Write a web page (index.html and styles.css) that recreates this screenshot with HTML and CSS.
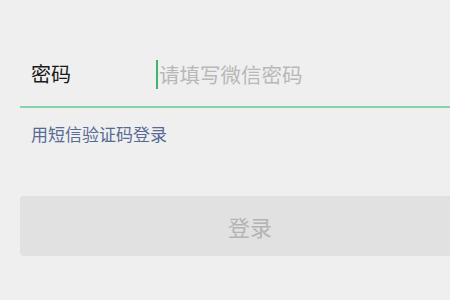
FILE: index.html
```html
<!DOCTYPE html>
<html lang="zh">
<head>
<meta charset="utf-8">
<link rel="stylesheet" href="styles.css">
</head>
<body>
<div class="page">
  <div class="field">
    <span class="label">密码</span>
    <span class="input"><span class="cursor"></span><span class="placeholder">请填写微信密码</span></span>
  </div>
  <div class="sms">用短信验证码登录</div>
  <div class="btn">登录</div>
</div>
</body>
</html>
```
FILE: styles.css
```css
* {
  box-sizing: border-box;
}
html, body {
  margin: 0;
  padding: 0;
  background: #efefef;
  overflow: hidden;
}
.page {
  width: 450px;
  height: 300px;
  font-family: "Noto Sans CJK SC", sans-serif;
  padding-top: 48px;
}
.field {
  margin-left: 20px;
  height: 60px;
  padding-bottom: 6px;
  display: flex;
  align-items: center;
  border-bottom: 2px solid #86d3ac;
}
.label {
  flex: 0 0 136px;
  padding-left: 11px;
  font-size: 20px;
  color: #1a1a1a;
  line-height: 1;
}
.input {
  display: flex;
  align-items: center;
}
.cursor {
  width: 2px;
  height: 29px;
  background: #3fb46f;
  margin-right: 1px;
}
.placeholder {
  font-size: 20.5px;
  color: #b8b8b8;
  line-height: 1;
}
.sms {
  margin: 14px 0 0 31px;
  font-size: 17px;
  line-height: 24px;
  color: #576b95;
}
.btn {
  margin: 50px 0 0 20px;
  width: 430px;
  height: 60px;
  background: #e1e1e1;
  border-radius: 4px 0 0 4px;
  display: flex;
  align-items: center;
  justify-content: center;
  padding-left: 30px;
  font-size: 22px;
  color: #b4b4b4;
}
```
